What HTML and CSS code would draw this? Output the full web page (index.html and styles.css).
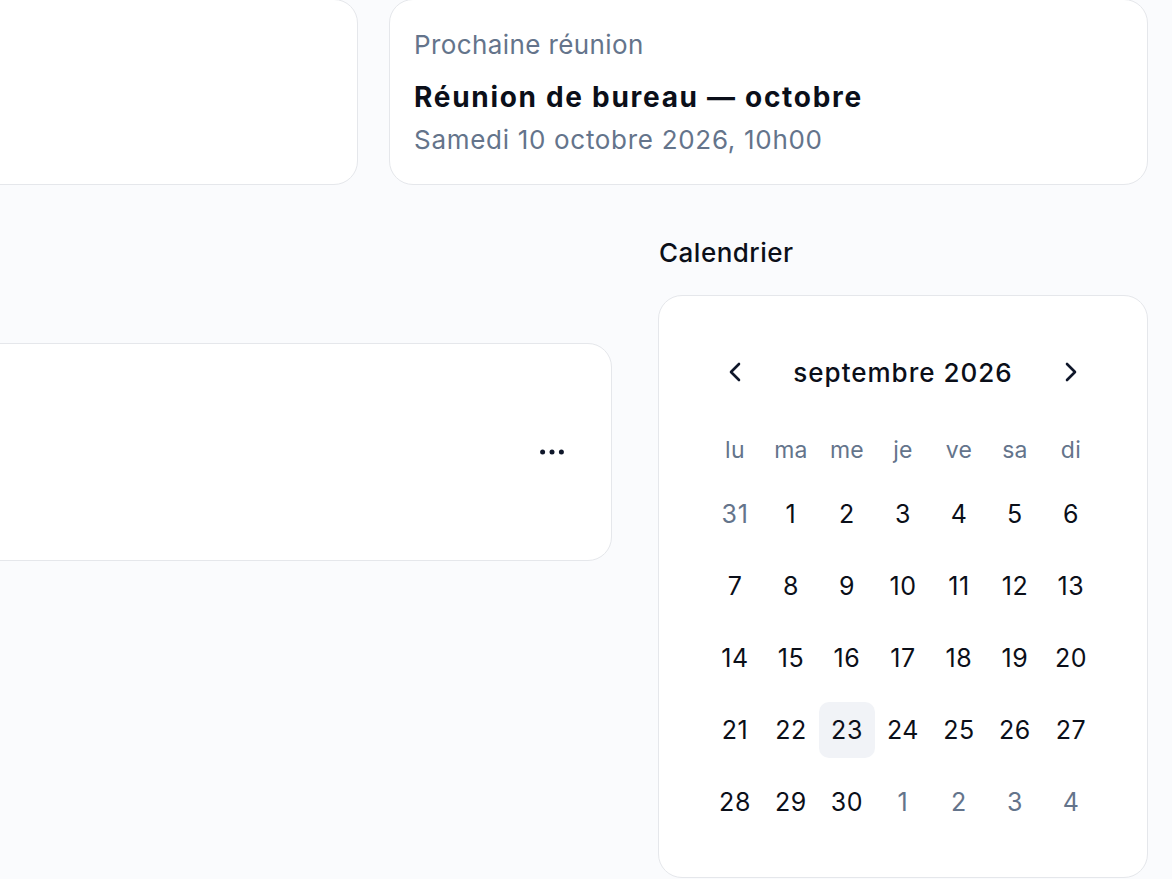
FILE: index.html
```html
<!DOCTYPE html>
<html lang="fr">
<head>
<meta charset="utf-8">
<title>Tableau de bord</title>
<link rel="stylesheet" href="styles.css">
</head>
<body>
<div class="page">
  <div class="top-row">
    <div class="card stat-card"></div>
    <div class="card stat-card">
      <div class="stat-label">Prochaine réunion</div>
      <div class="stat-title">Réunion de bureau — octobre</div>
      <div class="stat-sub">Samedi 10 octobre 2026, 10h00</div>
    </div>
  </div>

  <div class="main-row">
    <div class="left-col">
      <div class="card list-card">
        <button class="more-btn" aria-label="Plus d'options">
          <svg width="24" height="6" viewBox="0 0 24 6"><circle cx="2.6" cy="3" r="2.5" fill="#0f172a"/><circle cx="12" cy="3" r="2.5" fill="#0f172a"/><circle cx="21.4" cy="3" r="2.5" fill="#0f172a"/></svg>
        </button>
      </div>
    </div>

    <div class="right-col">
      <div class="section-title">Calendrier</div>
      <div class="card calendar">
        <div class="cal-nav">
          <button class="nav-btn" aria-label="Mois précédent">
            <svg width="14" height="20" viewBox="0 0 14 20"><path d="M11 2 L3 10 L11 18" fill="none" stroke="#0f172a" stroke-width="2.6" stroke-linecap="round" stroke-linejoin="round"/></svg>
          </button>
          <div class="cal-month">septembre 2026</div>
          <button class="nav-btn" aria-label="Mois suivant">
            <svg width="14" height="20" viewBox="0 0 14 20"><path d="M3 2 L11 10 L3 18" fill="none" stroke="#0f172a" stroke-width="2.6" stroke-linecap="round" stroke-linejoin="round"/></svg>
          </button>
        </div>
        <div class="cal-week">
          <span>lu</span><span>ma</span><span>me</span><span>je</span><span>ve</span><span>sa</span><span>di</span>
        </div>
        <div class="cal-grid">
          <span class="day muted">31</span><span class="day">1</span><span class="day">2</span><span class="day">3</span><span class="day">4</span><span class="day">5</span><span class="day">6</span>
          <span class="day">7</span><span class="day">8</span><span class="day">9</span><span class="day">10</span><span class="day">11</span><span class="day">12</span><span class="day">13</span>
          <span class="day">14</span><span class="day">15</span><span class="day">16</span><span class="day">17</span><span class="day">18</span><span class="day">19</span><span class="day">20</span>
          <span class="day">21</span><span class="day">22</span><span class="day today">23</span><span class="day">24</span><span class="day">25</span><span class="day">26</span><span class="day">27</span>
          <span class="day">28</span><span class="day">29</span><span class="day">30</span><span class="day muted">1</span><span class="day muted">2</span><span class="day muted">3</span><span class="day muted">4</span>
        </div>
      </div>
    </div>
  </div>
</div>
</body>
</html>
```

FILE: styles.css
```css
* { box-sizing: border-box; }

html, body {
  margin: 0;
  padding: 0;
  background: #fafbfd;
  overflow: hidden;
}

body {
  font-family: Inter, "Liberation Sans", sans-serif;
  color: #0b0f19;
  width: 1172px;
  height: 879px;
}

.page {
  margin-left: -401px;
  margin-top: -1px;
  width: 1549px;
}

.card {
  background: #ffffff;
  border: 1px solid #e5e7eb;
  border-radius: 24px;
}

.top-row {
  display: grid;
  grid-template-columns: 759px 759px;
  gap: 31px;
}

.stat-card {
  padding: 26px 24px;
  height: 186px;
}

.stat-label {
  font-size: 26px;
  line-height: 38px;
  letter-spacing: 0.4px;
  color: #64748b;
}

.stat-title {
  font-size: 28px;
  line-height: 40px;
  font-weight: 700;
  letter-spacing: 1.7px;
  margin-top: 13px;
  color: #0b0f19;
}

.stat-sub {
  font-size: 26px;
  line-height: 38px;
  letter-spacing: 0.7px;
  color: #64748b;
  margin-top: 4px;
}

.main-row {
  display: grid;
  grid-template-columns: 1013px 490px;
  gap: 46px;
  margin-top: 49px;
}

.left-col {
  padding-top: 109px;
}

.list-card {
  height: 218px;
  display: flex;
  align-items: center;
  justify-content: flex-end;
  padding-right: 39px;
}

.more-btn {
  border: 0;
  background: transparent;
  width: 40px;
  height: 40px;
  display: flex;
  align-items: center;
  justify-content: center;
  padding: 0;
}

.section-title {
  font-size: 26px;
  line-height: 38px;
  font-weight: 500;
  letter-spacing: 0.5px;
  margin-bottom: 23px;
  padding-left: 1px;
}

.calendar {
  padding: 48px;
  height: 583px;
}

.cal-nav {
  display: flex;
  align-items: center;
  justify-content: space-between;
  height: 56px;
}

.nav-btn {
  width: 56px;
  height: 56px;
  border: 0;
  background: transparent;
  display: flex;
  align-items: center;
  justify-content: center;
  padding: 0;
}

.cal-month {
  font-size: 26px;
  font-weight: 500;
  letter-spacing: 1px;
}

.cal-week {
  display: grid;
  grid-template-columns: repeat(7, 56px);
  margin-top: 30px;
  height: 40px;
  align-items: center;
  color: #64748b;
  font-size: 23px;
  letter-spacing: 0.3px;
  text-align: center;
}

.cal-grid {
  display: grid;
  grid-template-columns: repeat(7, 56px);
  grid-auto-rows: 56px;
  row-gap: 16px;
  margin-top: 16px;
}

.day {
  display: flex;
  align-items: center;
  justify-content: center;
  font-size: 25px;
  letter-spacing: 0.6px;
  border-radius: 10px;
}

.day.muted { color: #64748b; }

.day.today { background: #f1f3f7; }
```
